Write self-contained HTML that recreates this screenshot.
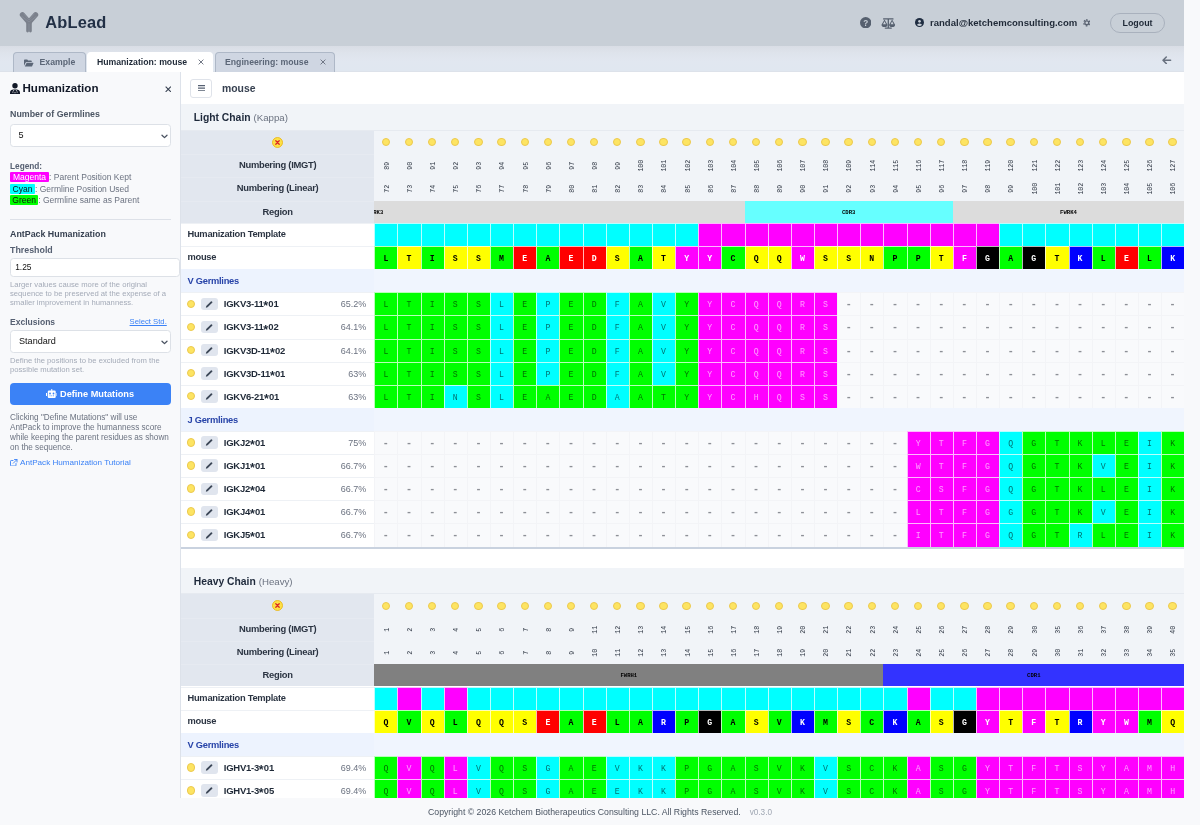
<!DOCTYPE html>
<html lang="en">
<head>
<meta charset="utf-8">
<title>AbLead - Humanization: mouse</title>
<style>
*{box-sizing:border-box}
html,body{margin:0;padding:0;overflow:hidden}
body{width:1200px;height:825px;overflow:hidden;position:relative;background:#f8f9fb;font-family:"Liberation Sans",sans-serif;color:#1f2937;font-size:9px}
svg{display:block}
#wrap{position:absolute;left:0;top:0;width:1200px;height:825px;will-change:transform}
/* ---------- top header ---------- */
#hdr{position:absolute;left:0;top:0;width:1184px;height:46px;background:#c8cfd7}
#logo{position:absolute;left:18.700px;top:11.400px}
#brand{position:absolute;left:45.200px;top:12.400px;font-weight:bold;font-size:16.400px;line-height:20px;color:#223046;letter-spacing:.2px}
.hi{position:absolute}
#email{position:absolute;left:930px;top:16px;font-weight:bold;font-size:9.55px;line-height:13px;color:#1f2937;white-space:nowrap}
#logout{position:absolute;left:1110px;top:13px;width:55px;height:19.500px;border:1px solid #a9b1bd;border-radius:10px;font-weight:bold;font-size:8.900px;line-height:18.800px;text-align:center;color:#1f2937}
/* ---------- tab bar ---------- */
#tabs{position:absolute;left:0;top:46px;width:1184px;height:26px;background:linear-gradient(#d9dde5 0%,#dee3eb 25%,#e1e7f0 60%,#e0e7f0 100%);border-bottom:1px solid #dde2ea}
.tab{position:absolute;top:6px;height:20px;border:1px solid #aeb8c7;border-bottom:none;border-radius:4px 4px 0 0;background:#cfd6e2;color:#5b6677;font-weight:bold;font-size:8.7px;line-height:19px;white-space:nowrap}
.tab.on{background:#fff;border-color:#fff;color:#1f2937}
.tab span{position:absolute;top:0}
/* ---------- sidebar ---------- */
#side{position:absolute;left:0;top:72px;width:181px;height:726px;background:#f8f9fb;border-right:1px solid #dde2ea}
#side .a{position:absolute;left:10px;white-space:nowrap}
.h1{font-weight:bold;font-size:11.6px;line-height:14px;color:#111827}
.lb{font-weight:bold;font-size:8.85px;line-height:11px;color:#4b5563}
.sel{position:absolute;left:10px;width:160.500px;height:22.800px;background:#fff;border:1px solid #dde1e7;border-radius:3.500px;font-size:9.100px;line-height:21.200px;padding-left:8px;color:#111}
.sel svg{position:absolute;right:1.700px;top:8.300px}
.hp{font-size:7.68px;line-height:8.7px;color:#a4abb8}
.lg{font-size:8.5px;line-height:11.4px;color:#6b7280}
.lg b{font-weight:normal;display:inline;padding:0 3px;border-radius:1px}
#btn{position:absolute;left:10px;top:311.2px;width:160.5px;height:21.8px;background:#3b82f6;border-radius:4px;color:#fff;font-weight:bold;font-size:9.2px;line-height:21.800px}
/* ---------- main ---------- */
#main{position:absolute;left:181px;top:72px;width:1003px;height:726px;background:#fff;overflow:hidden}
#pg{position:absolute;left:-181px;top:-72px;width:1200px;height:825px}
#pg>div,#pg>i{position:absolute}
#tb{left:181px;top:72px;width:1003px;height:32.2px;background:#fff}
#hb{left:190.300px;top:79.200px;width:21.500px;height:18.5px;border:1px solid #dfe3ea;border-radius:3px;background:#fff}
#ttl{left:222px;top:82px;font-weight:bold;font-size:10.4px;line-height:13px;color:#374151}
.ct{left:181px;width:1003px;background:#f1f4f8;border-bottom:1px solid #e6eaf0;padding-left:12.700px;font-size:10.350px;color:#1e293b;white-space:nowrap}
.ct span{color:#6b7280;font-size:9.700px}
.hbg{left:181px;width:193.3px;background:#e2e7ef}
.nbg{left:374.3px;width:810px;background:#f1f4f8}
.hl{left:181px;width:193.300px;height:23.330px;text-align:center;font-weight:bold;font-size:9.400px;letter-spacing:-.27px;line-height:20px;color:#2b3442;border-top:1px solid #e6eaf1}
.hl .xi{position:absolute;left:91.300px;top:6.300px}
.wl{left:181px;width:193.300px;height:23.700px;background:#fff;padding-left:6.500px;font-weight:bold;font-size:9.300px;letter-spacing:-.26px;line-height:21.400px;color:#2b3442;border-top:1px solid #eef1f5}
.sec{left:181px;width:1003.200px;height:23.700px;background:linear-gradient(90deg,#edf3fe 193.300px,#f0f5fe 193.300px);padding-left:6.500px;font-weight:bold;font-size:9.300px;letter-spacing:-.26px;line-height:24.200px;color:#2743a8}
.gl{left:181px;width:193.300px;height:23.700px;background:#fff;border-top:1px solid #eef1f5;font-size:9.1px;line-height:23.2px}
.gl .d2{position:absolute;left:5.800px;top:6.400px}
.gl .eb{position:absolute;left:20.400px;top:4.600px;width:16.400px;height:12.400px;border-radius:3px;background:#e0e5ee}
.gl .eb svg{position:absolute;left:3.900px;top:1.900px}
.gl .gn{position:absolute;left:42.800px;top:0;font-weight:bold;color:#1f2937;font-size:9.500px;letter-spacing:-.26px;line-height:22.200px}.gl .gn i{font-style:normal;font-size:12.500px;line-height:0;position:relative;top:3.100px;margin:0 .15px 0 -.1px;letter-spacing:0}
.gl .gp{position:absolute;right:8px;top:0;color:#6b7280;font-size:9px}
.dot{position:absolute;display:block;width:8.400px;height:8.400px;border-radius:50%;background:#fde462;border:1px solid #ecc94f}
.c{width:23.700px;height:23.700px;padding-right:1.560px;border-left:1px solid rgba(255,255,255,.72);border-top:1px solid rgba(255,255,255,.72);text-align:center;font-family:"Liberation Mono",monospace;font-size:8.200px;line-height:23.600px}
.c.mo{font-weight:bold}
.c.e{background:#f9fafc;border-color:#f3f4f7;color:#8d9097;font-size:10px;font-weight:bold;line-height:24px}
.xg{background:#00ff00;color:#000}.xy{background:#ffff00;color:#000}.xr{background:#ff0000;color:#fff}
.xm{background:#ff00ff;color:#fff}.xc{background:#00ffff;color:#000}.xk{background:#000;color:#fff}.xb{background:#0000ff;color:#fff}
.ge.xg{color:rgba(0,0,0,.58)}.ge.xc{color:rgba(0,0,0,.58)}.ge.xm{color:rgba(255,255,255,.62)}
.n{width:23.140px;height:23.330px;font-family:"Liberation Mono",monospace;font-size:6.600px;color:#2b3340}
.n span{position:absolute;left:1.400px;top:.3px;width:23.140px;height:23.330px;line-height:23.330px;text-align:center;transform:rotate(-90deg)}
.rg{text-align:center;font-family:"Liberation Mono",monospace;font-weight:bold;font-size:5.600px;overflow:hidden;white-space:nowrap}
.rg span{display:inline-block}
.bb{left:181px;width:1003.2px;height:2px;background:#c9d2df}
/* ---------- footer ---------- */
#foot{position:absolute;left:0;top:798px;width:1200px;height:27px;overflow:hidden;background:#f8f9fb;text-align:center;font-size:8.730px;line-height:28.500px;color:#4b5563;white-space:nowrap}
#foot span{color:#a0a7b3;margin-left:6.500px;font-size:8.200px}
#gut{position:absolute;left:1184px;top:0;width:16px;height:825px;background:#f8f9fb}
</style>
</head>
<body>
<div id="wrap">
<div id="hdr">
  <svg id="logo" width="20" height="22" viewBox="0 0 20 22"><g fill="none" stroke="#7b818c" stroke-linecap="round"><path stroke-width="5.200" d="M10 11.200L3.400 3.700M10 11.200L16.600 3.700"/><path stroke-width="2.800" d="M8.600 12V20.100M11.400 12V20.100"/></g><g fill="none" stroke="#9299a4" stroke-width=".5"><path d="M10 11L2.600 5.200M10 9L4.600 2.600M10 11L17.400 5.200M10 9L15.400 2.600M10 12.500V21"/></g></svg>
  <div id="brand">AbLead</div>
  <svg class="hi" style="left:859.700px;top:16.900px" width="11.400" height="11.400" viewBox="0 0 12 12"><circle cx="6" cy="6" r="6" fill="#56606f"/><text x="6" y="9.100" text-anchor="middle" font-family="Liberation Sans" font-weight="bold" font-size="8.600" fill="#c8cfd7">?</text></svg>
  <svg class="hi" style="left:881px;top:16.700px" width="14.600" height="12.400" viewBox="0 0 14.600 12.400"><g fill="none" stroke="#56606f" stroke-width="1.300" stroke-linecap="round"><path d="M2.600 1.900H12M7.300 1.900V10.900M4.300 11.100H10.300"/></g><path fill="#56606f" d="M3.500 2.600L.5 7.800a3 2.300 0 0 0 6 0zM11.100 2.600L8.100 7.800a3 2.300 0 0 0 6 0z"/><path fill="#c8cfd7" d="M3.500 4.300L2 7.200h3zM11.100 4.300L9.600 7.200h3z"/></svg>
  <svg class="hi" style="left:915.100px;top:18.100px" width="9" height="9" viewBox="0 0 10 10"><circle cx="5" cy="5" r="5" fill="#1f2d41"/><circle cx="5" cy="3.700" r="1.500" fill="#c8cfd7"/><path d="M2.300 7.900a2.700 1.900 0 0 1 5.400 0a4.300 4.300 0 0 1-5.400 0z" fill="#c8cfd7"/></svg>
  <div id="email">randal@ketchemconsulting.com</div>
  <svg class="hi" style="left:1082.700px;top:19.100px" width="7.600" height="7.600" viewBox="0 0 16 16"><g fill="none" stroke="#5a6372"><circle cx="8" cy="8" r="4.100" stroke-width="2.700"/><circle cx="8" cy="8" r="6.400" stroke-width="2.600" stroke-dasharray="3.300 3.402" transform="rotate(-104.8 8 8)"/></g></svg>
  <div id="logout">Logout</div>
</div>
<div id="tabs">
  <div class="tab" style="left:13px;width:73px"><svg style="position:absolute;left:10px;top:5.500px" width="9.500" height="8" viewBox="0 0 19 16"><path fill="#5b6677" d="M1.500 1h5l1.600 2H14a1.500 1.500 0 0 1 1.500 1.500V6H5.200a2 2 0 0 0-1.800 1.100L0 13.500V2.500A1.500 1.500 0 0 1 1.500 1zM5.300 7.300H18a1 1 0 0 1 .9 1.400l-2.700 5.700a1 1 0 0 1-.9.600H1.600z"/></svg><span style="left:25.500px">Example</span></div>
  <div class="tab on" style="left:87px;width:126px"><span style="left:8.900px">Humanization: mouse</span><svg style="position:absolute;left:109.500px;top:5.700px" width="6" height="6" viewBox="0 0 6 6"><path d="M.6.600L5.400 5.400M5.400.600L.6 5.400" stroke="#6b7280" stroke-width=".95" fill="none"/></svg></div>
  <div class="tab" style="left:214.500px;width:120.500px"><span style="left:9.500px">Engineering: mouse</span><svg style="position:absolute;left:104px;top:5.700px" width="6" height="6" viewBox="0 0 6 6"><path d="M.6.600L5.400 5.400M5.400.600L.6 5.400" stroke="#6b7280" stroke-width=".95" fill="none"/></svg></div>
  <svg style="position:absolute;left:1162px;top:9.500px" width="9.500" height="8.600" viewBox="0 0 9.500 8.600"><path d="M4.300 1L1 4.300L4.300 7.600M1.300 4.300H8.600" stroke="#68717f" stroke-width="1.500" fill="none" stroke-linecap="round" stroke-linejoin="round"/></svg>
</div>
<div id="side">
  <svg style="position:absolute;left:10px;top:11px" width="10" height="11.500" viewBox="0 0 10 11.500"><circle cx="5" cy="2.700" r="2.700" fill="#111827"/><path d="M0 10.900V9.600C0 7.700 1.600 6.500 3.400 6.500h3.200C8.400 6.500 10 7.700 10 9.600v1.300z" fill="#111827"/><path d="M2.100 9.100h1.400M6.500 9.100h1.400M4.300 9.700h1.400M3.600 7v1.200M6.400 7v1.200" stroke="#f8f9fb" stroke-width=".7"/></svg>
  <div class="a h1" style="left:22.500px;top:9.400px">Humanization</div>
  <svg style="position:absolute;left:164.500px;top:13.500px" width="6.500" height="6.500" viewBox="0 0 6 6"><path d="M.6.600L5.400 5.400M5.400.600L.6 5.400" stroke="#374151" stroke-width="1" fill="none"/></svg>
  <div class="a lb" style="top:36.500px">Number of Germlines</div>
  <div class="sel" style="top:52.300px;padding-left:7.400px">5<svg width="7" height="5" viewBox="0 0 7 5"><path d="M1 1.200L3.500 3.600L6 1.200" stroke="#4a5261" stroke-width="1.300" fill="none" stroke-linecap="round" stroke-linejoin="round"/></svg></div>
  <div class="a lb" style="top:88.800px;font-size:8.250px;color:#566072">Legend:</div>
  <div class="a lg" style="top:100.300px"><b style="background:#ff00ff;color:#fff">Magenta</b>: Parent Position Kept</div>
  <div class="a lg" style="top:111.700px"><b style="background:#00ffff;color:#111;padding:0 2.600px">Cyan</b>: Germline Position Used</div>
  <div class="a lg" style="top:123.200px"><b style="background:#00ff00;color:#111;padding:0 2.300px">Green</b>: Germline same as Parent</div>
  <div style="position:absolute;left:10px;top:146.500px;width:160.500px;height:1px;background:#dde1e8"></div>
  <div class="a lb" style="top:157px;color:#374151">AntPack Humanization</div>
  <div class="a lb" style="top:172.500px;color:#566072">Threshold</div>
  <div class="sel" style="top:186.300px;width:169.500px;height:19px;line-height:17.600px;padding-left:4.200px;font-size:8.400px">1.25</div>
  <div class="a hp" style="top:209.300px">Larger values cause more of the original</div><div class="a hp" style="top:218px">sequence to be preserved at the expense of a</div><div class="a hp" style="top:226.600px">smaller improvement in humanness.</div>
  <div class="a lb" style="top:244.900px;font-size:8.550px;color:#566072">Exclusions</div>
  <div class="a" style="left:129.600px;top:244.700px;font-size:7.700px;line-height:10px;color:#3b82f6;text-decoration:underline">Select Std.</div>
  <div class="sel" style="top:258.300px;height:22.400px">Standard<svg width="7" height="5" viewBox="0 0 7 5"><path d="M1 1.200L3.500 3.600L6 1.200" stroke="#4a5261" stroke-width="1.300" fill="none" stroke-linecap="round" stroke-linejoin="round"/></svg></div>
  <div class="a hp" style="top:285px">Define the positions to be excluded from the</div><div class="a hp" style="top:293.700px">possible mutation set.</div>
  <div id="btn"><svg style="position:absolute;left:35.800px;top:6px" width="11.500" height="10" viewBox="0 0 23 20"><path fill="#fff" d="M10.500 0h2v3h4.500a2.500 2.500 0 0 1 2.500 2.500v10A2.500 2.500 0 0 1 17 18H6a2.500 2.500 0 0 1-2.500-2.500v-10A2.500 2.500 0 0 1 6 3h4.500zM0 8h2v6H0zM21 8h2v6h-2z"/><circle cx="8" cy="9" r="1.800" fill="#3b82f6"/><circle cx="15" cy="9" r="1.800" fill="#3b82f6"/><path d="M7 13.500h2M10.500 13.500h2M14 13.500h2" stroke="#3b82f6" stroke-width="1.400"/></svg><span style="position:absolute;left:50px;top:1px">Define Mutations</span></div>
  <div class="a" style="top:340.700px;font-size:8.200px;line-height:10px;color:#6b7280">Clicking "Define Mutations" will use<br>AntPack to improve the humanness score<br>while keeping the parent residues as shown<br>on the sequence.</div>
  <svg style="position:absolute;left:10px;top:386.500px" width="7.500" height="7.500" viewBox="0 0 15 15"><g fill="none" stroke="#3b82f6" stroke-width="1.800" stroke-linecap="round" stroke-linejoin="round"><path d="M6 3H2.500A1.500 1.500 0 0 0 1 4.500v8A1.500 1.500 0 0 0 2.500 14h8a1.500 1.500 0 0 0 1.500-1.500V9"/><path d="M9 1h5v5M14 1L6.500 8.500"/></g></svg>
  <div class="a" style="left:20px;top:385.600px;font-size:8.120px;line-height:10px;color:#3b82f6">AntPack Humanization Tutorial</div>
</div>
<div id="main"><div id="pg">
  <div id="tb"></div>
  <div id="hb"><svg style="position:absolute;left:6.300px;top:4.700px" width="7.400" height="6.400" viewBox="0 0 7.400 6.400"><path d="M0 .6h7.400M0 3.150h7.400M0 5.700h7.400" stroke="#566072" stroke-width="1.100"/></svg></div>
  <div id="ttl">mouse</div>
  <div class="ct" style="top:103.9px;height:26.7px;line-height:28.7px"><b>Light Chain</b> <span>(Kappa)</span></div><div class="hbg" style="top:130.6px;height:92.5px"></div><div class="nbg" style="top:130.6px;height:70px"></div><div class="hl" style="top:130.6px;border-top:none"><span class="xi"><svg viewBox="0 0 11 11" width="11" height="11"><circle cx="5.5" cy="5.5" r="5" fill="#fde047" stroke="#eab308" stroke-width=".8"/><path d="M3.800 3.800L7.200 7.200M7.200 3.800L3.800 7.200" stroke="#dc2626" stroke-width="1.300" stroke-linecap="round"/></svg></span></div><div class="hl" style="top:153.93px">Numbering (IMGT)</div><div class="hl" style="top:177.26px">Numbering (Linear)</div><div class="hl" style="top:200.6px;height:22.5px;line-height:19.600px">Region</div><div class="wl" style="top:223.1px">Humanization Template</div><div class="wl" style="top:246.18px">mouse</div><i class="dot" style="left:381.67px;top:137.97px"></i><i class="dot" style="left:404.81px;top:137.97px"></i><i class="dot" style="left:427.95px;top:137.97px"></i><i class="dot" style="left:451.09px;top:137.97px"></i><i class="dot" style="left:474.23px;top:137.97px"></i><i class="dot" style="left:497.37px;top:137.97px"></i><i class="dot" style="left:520.51px;top:137.97px"></i><i class="dot" style="left:543.65px;top:137.97px"></i><i class="dot" style="left:566.79px;top:137.97px"></i><i class="dot" style="left:589.93px;top:137.97px"></i><i class="dot" style="left:613.07px;top:137.97px"></i><i class="dot" style="left:636.21px;top:137.97px"></i><i class="dot" style="left:659.35px;top:137.97px"></i><i class="dot" style="left:682.49px;top:137.97px"></i><i class="dot" style="left:705.63px;top:137.97px"></i><i class="dot" style="left:728.77px;top:137.97px"></i><i class="dot" style="left:751.91px;top:137.97px"></i><i class="dot" style="left:775.05px;top:137.97px"></i><i class="dot" style="left:798.19px;top:137.97px"></i><i class="dot" style="left:821.33px;top:137.97px"></i><i class="dot" style="left:844.47px;top:137.97px"></i><i class="dot" style="left:867.61px;top:137.97px"></i><i class="dot" style="left:890.75px;top:137.97px"></i><i class="dot" style="left:913.89px;top:137.97px"></i><i class="dot" style="left:937.03px;top:137.97px"></i><i class="dot" style="left:960.17px;top:137.97px"></i><i class="dot" style="left:983.31px;top:137.97px"></i><i class="dot" style="left:1006.45px;top:137.97px"></i><i class="dot" style="left:1029.59px;top:137.97px"></i><i class="dot" style="left:1052.73px;top:137.97px"></i><i class="dot" style="left:1075.87px;top:137.97px"></i><i class="dot" style="left:1099.01px;top:137.97px"></i><i class="dot" style="left:1122.15px;top:137.97px"></i><i class="dot" style="left:1145.29px;top:137.97px"></i><i class="dot" style="left:1168.43px;top:137.97px"></i><div class="n" style="left:374.3px;top:153.93px"><span>89</span></div><div class="n" style="left:397.44px;top:153.93px"><span>90</span></div><div class="n" style="left:420.58px;top:153.93px"><span>91</span></div><div class="n" style="left:443.72px;top:153.93px"><span>92</span></div><div class="n" style="left:466.86px;top:153.93px"><span>93</span></div><div class="n" style="left:490px;top:153.93px"><span>94</span></div><div class="n" style="left:513.14px;top:153.93px"><span>95</span></div><div class="n" style="left:536.28px;top:153.93px"><span>96</span></div><div class="n" style="left:559.42px;top:153.93px"><span>97</span></div><div class="n" style="left:582.56px;top:153.93px"><span>98</span></div><div class="n" style="left:605.7px;top:153.93px"><span>99</span></div><div class="n" style="left:628.84px;top:153.93px"><span>100</span></div><div class="n" style="left:651.98px;top:153.93px"><span>101</span></div><div class="n" style="left:675.12px;top:153.93px"><span>102</span></div><div class="n" style="left:698.26px;top:153.93px"><span>103</span></div><div class="n" style="left:721.4px;top:153.93px"><span>104</span></div><div class="n" style="left:744.54px;top:153.93px"><span>105</span></div><div class="n" style="left:767.68px;top:153.93px"><span>106</span></div><div class="n" style="left:790.82px;top:153.93px"><span>107</span></div><div class="n" style="left:813.96px;top:153.93px"><span>108</span></div><div class="n" style="left:837.1px;top:153.93px"><span>109</span></div><div class="n" style="left:860.24px;top:153.93px"><span>114</span></div><div class="n" style="left:883.38px;top:153.93px"><span>115</span></div><div class="n" style="left:906.52px;top:153.93px"><span>116</span></div><div class="n" style="left:929.66px;top:153.93px"><span>117</span></div><div class="n" style="left:952.8px;top:153.93px"><span>118</span></div><div class="n" style="left:975.94px;top:153.93px"><span>119</span></div><div class="n" style="left:999.08px;top:153.93px"><span>120</span></div><div class="n" style="left:1022.22px;top:153.93px"><span>121</span></div><div class="n" style="left:1045.36px;top:153.93px"><span>122</span></div><div class="n" style="left:1068.5px;top:153.93px"><span>123</span></div><div class="n" style="left:1091.64px;top:153.93px"><span>124</span></div><div class="n" style="left:1114.78px;top:153.93px"><span>125</span></div><div class="n" style="left:1137.92px;top:153.93px"><span>126</span></div><div class="n" style="left:1161.06px;top:153.93px"><span>127</span></div><div class="n" style="left:374.3px;top:176.76px"><span>72</span></div><div class="n" style="left:397.44px;top:176.76px"><span>73</span></div><div class="n" style="left:420.58px;top:176.76px"><span>74</span></div><div class="n" style="left:443.72px;top:176.76px"><span>75</span></div><div class="n" style="left:466.86px;top:176.76px"><span>76</span></div><div class="n" style="left:490px;top:176.76px"><span>77</span></div><div class="n" style="left:513.14px;top:176.76px"><span>78</span></div><div class="n" style="left:536.28px;top:176.76px"><span>79</span></div><div class="n" style="left:559.42px;top:176.76px"><span>80</span></div><div class="n" style="left:582.56px;top:176.76px"><span>81</span></div><div class="n" style="left:605.7px;top:176.76px"><span>82</span></div><div class="n" style="left:628.84px;top:176.76px"><span>83</span></div><div class="n" style="left:651.98px;top:176.76px"><span>84</span></div><div class="n" style="left:675.12px;top:176.76px"><span>85</span></div><div class="n" style="left:698.26px;top:176.76px"><span>86</span></div><div class="n" style="left:721.4px;top:176.76px"><span>87</span></div><div class="n" style="left:744.54px;top:176.76px"><span>88</span></div><div class="n" style="left:767.68px;top:176.76px"><span>89</span></div><div class="n" style="left:790.82px;top:176.76px"><span>90</span></div><div class="n" style="left:813.96px;top:176.76px"><span>91</span></div><div class="n" style="left:837.1px;top:176.76px"><span>92</span></div><div class="n" style="left:860.24px;top:176.76px"><span>93</span></div><div class="n" style="left:883.38px;top:176.76px"><span>94</span></div><div class="n" style="left:906.52px;top:176.76px"><span>95</span></div><div class="n" style="left:929.66px;top:176.76px"><span>96</span></div><div class="n" style="left:952.8px;top:176.76px"><span>97</span></div><div class="n" style="left:975.94px;top:176.76px"><span>98</span></div><div class="n" style="left:999.08px;top:176.76px"><span>99</span></div><div class="n" style="left:1022.22px;top:176.76px"><span>100</span></div><div class="n" style="left:1045.36px;top:176.76px"><span>101</span></div><div class="n" style="left:1068.5px;top:176.76px"><span>102</span></div><div class="n" style="left:1091.64px;top:176.76px"><span>103</span></div><div class="n" style="left:1114.78px;top:176.76px"><span>104</span></div><div class="n" style="left:1137.92px;top:176.76px"><span>105</span></div><div class="n" style="left:1161.06px;top:176.76px"><span>106</span></div><div class="rg" style="left:374.3px;top:200.6px;width:370.24px;height:22.5px;line-height:23.4px;background:#dcdcdc;color:#000;text-align:left"><span style="margin-left:-7.800px">FWRK3</span></div><div class="rg" style="left:744.54px;top:200.6px;width:208.26px;height:22.5px;line-height:23.4px;background:#66ffff;color:#000">CDR3</div><div class="rg" style="left:952.8px;top:200.6px;width:231.4px;height:22.5px;line-height:23.4px;background:#dcdcdc;color:#000">FWRK4</div><div class="c t xc" style="left:374.3px;top:223.1px"> </div><div class="c t xc" style="left:397.44px;top:223.1px"> </div><div class="c t xc" style="left:420.58px;top:223.1px"> </div><div class="c t xc" style="left:443.72px;top:223.1px"> </div><div class="c t xc" style="left:466.86px;top:223.1px"> </div><div class="c t xc" style="left:490px;top:223.1px"> </div><div class="c t xc" style="left:513.14px;top:223.1px"> </div><div class="c t xc" style="left:536.28px;top:223.1px"> </div><div class="c t xc" style="left:559.42px;top:223.1px"> </div><div class="c t xc" style="left:582.56px;top:223.1px"> </div><div class="c t xc" style="left:605.7px;top:223.1px"> </div><div class="c t xc" style="left:628.84px;top:223.1px"> </div><div class="c t xc" style="left:651.98px;top:223.1px"> </div><div class="c t xc" style="left:675.12px;top:223.1px"> </div><div class="c t xm" style="left:698.26px;top:223.1px"> </div><div class="c t xm" style="left:721.4px;top:223.1px"> </div><div class="c t xm" style="left:744.54px;top:223.1px"> </div><div class="c t xm" style="left:767.68px;top:223.1px"> </div><div class="c t xm" style="left:790.82px;top:223.1px"> </div><div class="c t xm" style="left:813.96px;top:223.1px"> </div><div class="c t xm" style="left:837.1px;top:223.1px"> </div><div class="c t xm" style="left:860.24px;top:223.1px"> </div><div class="c t xm" style="left:883.38px;top:223.1px"> </div><div class="c t xm" style="left:906.52px;top:223.1px"> </div><div class="c t xm" style="left:929.66px;top:223.1px"> </div><div class="c t xm" style="left:952.8px;top:223.1px"> </div><div class="c t xm" style="left:975.94px;top:223.1px"> </div><div class="c t xc" style="left:999.08px;top:223.1px"> </div><div class="c t xc" style="left:1022.22px;top:223.1px"> </div><div class="c t xc" style="left:1045.36px;top:223.1px"> </div><div class="c t xc" style="left:1068.5px;top:223.1px"> </div><div class="c t xc" style="left:1091.64px;top:223.1px"> </div><div class="c t xc" style="left:1114.78px;top:223.1px"> </div><div class="c t xc" style="left:1137.92px;top:223.1px"> </div><div class="c t xc" style="left:1161.06px;top:223.1px"> </div><div class="c mo xg" style="left:374.3px;top:246.18px">L</div><div class="c mo xy" style="left:397.44px;top:246.18px">T</div><div class="c mo xg" style="left:420.58px;top:246.18px">I</div><div class="c mo xy" style="left:443.72px;top:246.18px">S</div><div class="c mo xy" style="left:466.86px;top:246.18px">S</div><div class="c mo xg" style="left:490px;top:246.18px">M</div><div class="c mo xr" style="left:513.14px;top:246.18px">E</div><div class="c mo xg" style="left:536.28px;top:246.18px">A</div><div class="c mo xr" style="left:559.42px;top:246.18px">E</div><div class="c mo xr" style="left:582.56px;top:246.18px">D</div><div class="c mo xy" style="left:605.7px;top:246.18px">S</div><div class="c mo xg" style="left:628.84px;top:246.18px">A</div><div class="c mo xy" style="left:651.98px;top:246.18px">T</div><div class="c mo xm" style="left:675.12px;top:246.18px">Y</div><div class="c mo xm" style="left:698.26px;top:246.18px">Y</div><div class="c mo xg" style="left:721.4px;top:246.18px">C</div><div class="c mo xy" style="left:744.54px;top:246.18px">Q</div><div class="c mo xy" style="left:767.68px;top:246.18px">Q</div><div class="c mo xm" style="left:790.82px;top:246.18px">W</div><div class="c mo xy" style="left:813.96px;top:246.18px">S</div><div class="c mo xy" style="left:837.1px;top:246.18px">S</div><div class="c mo xy" style="left:860.24px;top:246.18px">N</div><div class="c mo xg" style="left:883.38px;top:246.18px">P</div><div class="c mo xg" style="left:906.52px;top:246.18px">P</div><div class="c mo xy" style="left:929.66px;top:246.18px">T</div><div class="c mo xm" style="left:952.8px;top:246.18px">F</div><div class="c mo xk" style="left:975.94px;top:246.18px">G</div><div class="c mo xg" style="left:999.08px;top:246.18px">A</div><div class="c mo xk" style="left:1022.22px;top:246.18px">G</div><div class="c mo xy" style="left:1045.36px;top:246.18px">T</div><div class="c mo xb" style="left:1068.5px;top:246.18px">K</div><div class="c mo xg" style="left:1091.64px;top:246.18px">L</div><div class="c mo xr" style="left:1114.78px;top:246.18px">E</div><div class="c mo xg" style="left:1137.92px;top:246.18px">L</div><div class="c mo xb" style="left:1161.06px;top:246.18px">K</div><div class="sec" style="top:269.26px">V Germlines</div><div class="gl" style="top:292.34px"><i class="dot d2"></i><span class="eb"><svg viewBox="0 0 10 10" width="8.600" height="8.600"><path fill="#3b4656" d="M1 9l.45-2L6.800 1.650a.85.850 0 0 1 1.200 0l.35.350a.85.850 0 0 1 0 1.200L3 8.550z"/></svg></span><span class="gn">IGKV3-11<i>*</i>01</span><span class="gp">65.2%</span></div><div class="gl" style="top:315.42px"><i class="dot d2"></i><span class="eb"><svg viewBox="0 0 10 10" width="8.600" height="8.600"><path fill="#3b4656" d="M1 9l.45-2L6.800 1.650a.85.850 0 0 1 1.200 0l.35.350a.85.850 0 0 1 0 1.200L3 8.550z"/></svg></span><span class="gn">IGKV3-11<i>*</i>02</span><span class="gp">64.1%</span></div><div class="gl" style="top:338.5px"><i class="dot d2"></i><span class="eb"><svg viewBox="0 0 10 10" width="8.600" height="8.600"><path fill="#3b4656" d="M1 9l.45-2L6.800 1.650a.85.850 0 0 1 1.200 0l.35.350a.85.850 0 0 1 0 1.200L3 8.550z"/></svg></span><span class="gn">IGKV3D-11<i>*</i>02</span><span class="gp">64.1%</span></div><div class="gl" style="top:361.58px"><i class="dot d2"></i><span class="eb"><svg viewBox="0 0 10 10" width="8.600" height="8.600"><path fill="#3b4656" d="M1 9l.45-2L6.800 1.650a.85.850 0 0 1 1.200 0l.35.350a.85.850 0 0 1 0 1.200L3 8.550z"/></svg></span><span class="gn">IGKV3D-11<i>*</i>01</span><span class="gp">63%</span></div><div class="gl" style="top:384.66px"><i class="dot d2"></i><span class="eb"><svg viewBox="0 0 10 10" width="8.600" height="8.600"><path fill="#3b4656" d="M1 9l.45-2L6.800 1.650a.85.850 0 0 1 1.200 0l.35.350a.85.850 0 0 1 0 1.200L3 8.550z"/></svg></span><span class="gn">IGKV6-21<i>*</i>01</span><span class="gp">63%</span></div><div class="c ge xg" style="left:374.3px;top:292.34px">L</div><div class="c ge xg" style="left:397.44px;top:292.34px">T</div><div class="c ge xg" style="left:420.58px;top:292.34px">I</div><div class="c ge xg" style="left:443.72px;top:292.34px">S</div><div class="c ge xg" style="left:466.86px;top:292.34px">S</div><div class="c ge xc" style="left:490px;top:292.34px">L</div><div class="c ge xg" style="left:513.14px;top:292.34px">E</div><div class="c ge xc" style="left:536.28px;top:292.34px">P</div><div class="c ge xg" style="left:559.42px;top:292.34px">E</div><div class="c ge xg" style="left:582.56px;top:292.34px">D</div><div class="c ge xc" style="left:605.7px;top:292.34px">F</div><div class="c ge xg" style="left:628.84px;top:292.34px">A</div><div class="c ge xc" style="left:651.98px;top:292.34px">V</div><div class="c ge xg" style="left:675.12px;top:292.34px">Y</div><div class="c ge xm" style="left:698.26px;top:292.34px">Y</div><div class="c ge xm" style="left:721.4px;top:292.34px">C</div><div class="c ge xm" style="left:744.54px;top:292.34px">Q</div><div class="c ge xm" style="left:767.68px;top:292.34px">Q</div><div class="c ge xm" style="left:790.82px;top:292.34px">R</div><div class="c ge xm" style="left:813.96px;top:292.34px">S</div><div class="c e" style="left:837.1px;top:292.34px">-</div><div class="c e" style="left:860.24px;top:292.34px">-</div><div class="c e" style="left:883.38px;top:292.34px">-</div><div class="c e" style="left:906.52px;top:292.34px">-</div><div class="c e" style="left:929.66px;top:292.34px">-</div><div class="c e" style="left:952.8px;top:292.34px">-</div><div class="c e" style="left:975.94px;top:292.34px">-</div><div class="c e" style="left:999.08px;top:292.34px">-</div><div class="c e" style="left:1022.22px;top:292.34px">-</div><div class="c e" style="left:1045.36px;top:292.34px">-</div><div class="c e" style="left:1068.5px;top:292.34px">-</div><div class="c e" style="left:1091.64px;top:292.34px">-</div><div class="c e" style="left:1114.78px;top:292.34px">-</div><div class="c e" style="left:1137.92px;top:292.34px">-</div><div class="c e" style="left:1161.06px;top:292.34px">-</div><div class="c ge xg" style="left:374.3px;top:315.42px">L</div><div class="c ge xg" style="left:397.44px;top:315.42px">T</div><div class="c ge xg" style="left:420.58px;top:315.42px">I</div><div class="c ge xg" style="left:443.72px;top:315.42px">S</div><div class="c ge xg" style="left:466.86px;top:315.42px">S</div><div class="c ge xc" style="left:490px;top:315.42px">L</div><div class="c ge xg" style="left:513.14px;top:315.42px">E</div><div class="c ge xc" style="left:536.28px;top:315.42px">P</div><div class="c ge xg" style="left:559.42px;top:315.42px">E</div><div class="c ge xg" style="left:582.56px;top:315.42px">D</div><div class="c ge xc" style="left:605.7px;top:315.42px">F</div><div class="c ge xg" style="left:628.84px;top:315.42px">A</div><div class="c ge xc" style="left:651.98px;top:315.42px">V</div><div class="c ge xg" style="left:675.12px;top:315.42px">Y</div><div class="c ge xm" style="left:698.26px;top:315.42px">Y</div><div class="c ge xm" style="left:721.4px;top:315.42px">C</div><div class="c ge xm" style="left:744.54px;top:315.42px">Q</div><div class="c ge xm" style="left:767.68px;top:315.42px">Q</div><div class="c ge xm" style="left:790.82px;top:315.42px">R</div><div class="c ge xm" style="left:813.96px;top:315.42px">S</div><div class="c e" style="left:837.1px;top:315.42px">-</div><div class="c e" style="left:860.24px;top:315.42px">-</div><div class="c e" style="left:883.38px;top:315.42px">-</div><div class="c e" style="left:906.52px;top:315.42px">-</div><div class="c e" style="left:929.66px;top:315.42px">-</div><div class="c e" style="left:952.8px;top:315.42px">-</div><div class="c e" style="left:975.94px;top:315.42px">-</div><div class="c e" style="left:999.08px;top:315.42px">-</div><div class="c e" style="left:1022.22px;top:315.42px">-</div><div class="c e" style="left:1045.36px;top:315.42px">-</div><div class="c e" style="left:1068.5px;top:315.42px">-</div><div class="c e" style="left:1091.64px;top:315.42px">-</div><div class="c e" style="left:1114.78px;top:315.42px">-</div><div class="c e" style="left:1137.92px;top:315.42px">-</div><div class="c e" style="left:1161.06px;top:315.42px">-</div><div class="c ge xg" style="left:374.3px;top:338.5px">L</div><div class="c ge xg" style="left:397.44px;top:338.5px">T</div><div class="c ge xg" style="left:420.58px;top:338.5px">I</div><div class="c ge xg" style="left:443.72px;top:338.5px">S</div><div class="c ge xg" style="left:466.86px;top:338.5px">S</div><div class="c ge xc" style="left:490px;top:338.5px">L</div><div class="c ge xg" style="left:513.14px;top:338.5px">E</div><div class="c ge xc" style="left:536.28px;top:338.5px">P</div><div class="c ge xg" style="left:559.42px;top:338.5px">E</div><div class="c ge xg" style="left:582.56px;top:338.5px">D</div><div class="c ge xc" style="left:605.7px;top:338.5px">F</div><div class="c ge xg" style="left:628.84px;top:338.5px">A</div><div class="c ge xc" style="left:651.98px;top:338.5px">V</div><div class="c ge xg" style="left:675.12px;top:338.5px">Y</div><div class="c ge xm" style="left:698.26px;top:338.5px">Y</div><div class="c ge xm" style="left:721.4px;top:338.5px">C</div><div class="c ge xm" style="left:744.54px;top:338.5px">Q</div><div class="c ge xm" style="left:767.68px;top:338.5px">Q</div><div class="c ge xm" style="left:790.82px;top:338.5px">R</div><div class="c ge xm" style="left:813.96px;top:338.5px">S</div><div class="c e" style="left:837.1px;top:338.5px">-</div><div class="c e" style="left:860.24px;top:338.5px">-</div><div class="c e" style="left:883.38px;top:338.5px">-</div><div class="c e" style="left:906.52px;top:338.5px">-</div><div class="c e" style="left:929.66px;top:338.5px">-</div><div class="c e" style="left:952.8px;top:338.5px">-</div><div class="c e" style="left:975.94px;top:338.5px">-</div><div class="c e" style="left:999.08px;top:338.5px">-</div><div class="c e" style="left:1022.22px;top:338.5px">-</div><div class="c e" style="left:1045.36px;top:338.5px">-</div><div class="c e" style="left:1068.5px;top:338.5px">-</div><div class="c e" style="left:1091.64px;top:338.5px">-</div><div class="c e" style="left:1114.78px;top:338.5px">-</div><div class="c e" style="left:1137.92px;top:338.5px">-</div><div class="c e" style="left:1161.06px;top:338.5px">-</div><div class="c ge xg" style="left:374.3px;top:361.58px">L</div><div class="c ge xg" style="left:397.44px;top:361.58px">T</div><div class="c ge xg" style="left:420.58px;top:361.58px">I</div><div class="c ge xg" style="left:443.72px;top:361.58px">S</div><div class="c ge xg" style="left:466.86px;top:361.58px">S</div><div class="c ge xc" style="left:490px;top:361.58px">L</div><div class="c ge xg" style="left:513.14px;top:361.58px">E</div><div class="c ge xc" style="left:536.28px;top:361.58px">P</div><div class="c ge xg" style="left:559.42px;top:361.58px">E</div><div class="c ge xg" style="left:582.56px;top:361.58px">D</div><div class="c ge xc" style="left:605.7px;top:361.58px">F</div><div class="c ge xg" style="left:628.84px;top:361.58px">A</div><div class="c ge xc" style="left:651.98px;top:361.58px">V</div><div class="c ge xg" style="left:675.12px;top:361.58px">Y</div><div class="c ge xm" style="left:698.26px;top:361.58px">Y</div><div class="c ge xm" style="left:721.4px;top:361.58px">C</div><div class="c ge xm" style="left:744.54px;top:361.58px">Q</div><div class="c ge xm" style="left:767.68px;top:361.58px">Q</div><div class="c ge xm" style="left:790.82px;top:361.58px">R</div><div class="c ge xm" style="left:813.96px;top:361.58px">S</div><div class="c e" style="left:837.1px;top:361.58px">-</div><div class="c e" style="left:860.24px;top:361.58px">-</div><div class="c e" style="left:883.38px;top:361.58px">-</div><div class="c e" style="left:906.52px;top:361.58px">-</div><div class="c e" style="left:929.66px;top:361.58px">-</div><div class="c e" style="left:952.8px;top:361.58px">-</div><div class="c e" style="left:975.94px;top:361.58px">-</div><div class="c e" style="left:999.08px;top:361.58px">-</div><div class="c e" style="left:1022.22px;top:361.58px">-</div><div class="c e" style="left:1045.36px;top:361.58px">-</div><div class="c e" style="left:1068.5px;top:361.58px">-</div><div class="c e" style="left:1091.64px;top:361.58px">-</div><div class="c e" style="left:1114.78px;top:361.58px">-</div><div class="c e" style="left:1137.92px;top:361.58px">-</div><div class="c e" style="left:1161.06px;top:361.58px">-</div><div class="c ge xg" style="left:374.3px;top:384.66px">L</div><div class="c ge xg" style="left:397.44px;top:384.66px">T</div><div class="c ge xg" style="left:420.58px;top:384.66px">I</div><div class="c ge xc" style="left:443.72px;top:384.66px">N</div><div class="c ge xg" style="left:466.86px;top:384.66px">S</div><div class="c ge xc" style="left:490px;top:384.66px">L</div><div class="c ge xg" style="left:513.14px;top:384.66px">E</div><div class="c ge xg" style="left:536.28px;top:384.66px">A</div><div class="c ge xg" style="left:559.42px;top:384.66px">E</div><div class="c ge xg" style="left:582.56px;top:384.66px">D</div><div class="c ge xc" style="left:605.7px;top:384.66px">A</div><div class="c ge xg" style="left:628.84px;top:384.66px">A</div><div class="c ge xg" style="left:651.98px;top:384.66px">T</div><div class="c ge xg" style="left:675.12px;top:384.66px">Y</div><div class="c ge xm" style="left:698.26px;top:384.66px">Y</div><div class="c ge xm" style="left:721.4px;top:384.66px">C</div><div class="c ge xm" style="left:744.54px;top:384.66px">H</div><div class="c ge xm" style="left:767.68px;top:384.66px">Q</div><div class="c ge xm" style="left:790.82px;top:384.66px">S</div><div class="c ge xm" style="left:813.96px;top:384.66px">S</div><div class="c e" style="left:837.1px;top:384.66px">-</div><div class="c e" style="left:860.24px;top:384.66px">-</div><div class="c e" style="left:883.38px;top:384.66px">-</div><div class="c e" style="left:906.52px;top:384.66px">-</div><div class="c e" style="left:929.66px;top:384.66px">-</div><div class="c e" style="left:952.8px;top:384.66px">-</div><div class="c e" style="left:975.94px;top:384.66px">-</div><div class="c e" style="left:999.08px;top:384.66px">-</div><div class="c e" style="left:1022.22px;top:384.66px">-</div><div class="c e" style="left:1045.36px;top:384.66px">-</div><div class="c e" style="left:1068.5px;top:384.66px">-</div><div class="c e" style="left:1091.64px;top:384.66px">-</div><div class="c e" style="left:1114.78px;top:384.66px">-</div><div class="c e" style="left:1137.92px;top:384.66px">-</div><div class="c e" style="left:1161.06px;top:384.66px">-</div><div class="sec" style="top:407.74px">J Germlines</div><div class="gl" style="top:430.82px"><i class="dot d2"></i><span class="eb"><svg viewBox="0 0 10 10" width="8.600" height="8.600"><path fill="#3b4656" d="M1 9l.45-2L6.800 1.650a.85.850 0 0 1 1.200 0l.35.350a.85.850 0 0 1 0 1.200L3 8.550z"/></svg></span><span class="gn">IGKJ2<i>*</i>01</span><span class="gp">75%</span></div><div class="gl" style="top:453.9px"><i class="dot d2"></i><span class="eb"><svg viewBox="0 0 10 10" width="8.600" height="8.600"><path fill="#3b4656" d="M1 9l.45-2L6.800 1.650a.85.850 0 0 1 1.200 0l.35.350a.85.850 0 0 1 0 1.200L3 8.550z"/></svg></span><span class="gn">IGKJ1<i>*</i>01</span><span class="gp">66.7%</span></div><div class="gl" style="top:476.98px"><i class="dot d2"></i><span class="eb"><svg viewBox="0 0 10 10" width="8.600" height="8.600"><path fill="#3b4656" d="M1 9l.45-2L6.800 1.650a.85.850 0 0 1 1.200 0l.35.350a.85.850 0 0 1 0 1.200L3 8.550z"/></svg></span><span class="gn">IGKJ2<i>*</i>04</span><span class="gp">66.7%</span></div><div class="gl" style="top:500.06px"><i class="dot d2"></i><span class="eb"><svg viewBox="0 0 10 10" width="8.600" height="8.600"><path fill="#3b4656" d="M1 9l.45-2L6.800 1.650a.85.850 0 0 1 1.200 0l.35.350a.85.850 0 0 1 0 1.200L3 8.550z"/></svg></span><span class="gn">IGKJ4<i>*</i>01</span><span class="gp">66.7%</span></div><div class="gl" style="top:523.14px"><i class="dot d2"></i><span class="eb"><svg viewBox="0 0 10 10" width="8.600" height="8.600"><path fill="#3b4656" d="M1 9l.45-2L6.800 1.650a.85.850 0 0 1 1.200 0l.35.350a.85.850 0 0 1 0 1.200L3 8.550z"/></svg></span><span class="gn">IGKJ5<i>*</i>01</span><span class="gp">66.7%</span></div><div class="c e" style="left:374.3px;top:430.82px">-</div><div class="c e" style="left:397.44px;top:430.82px">-</div><div class="c e" style="left:420.58px;top:430.82px">-</div><div class="c e" style="left:443.72px;top:430.82px">-</div><div class="c e" style="left:466.86px;top:430.82px">-</div><div class="c e" style="left:490px;top:430.82px">-</div><div class="c e" style="left:513.14px;top:430.82px">-</div><div class="c e" style="left:536.28px;top:430.82px">-</div><div class="c e" style="left:559.42px;top:430.82px">-</div><div class="c e" style="left:582.56px;top:430.82px">-</div><div class="c e" style="left:605.7px;top:430.82px">-</div><div class="c e" style="left:628.84px;top:430.82px">-</div><div class="c e" style="left:651.98px;top:430.82px">-</div><div class="c e" style="left:675.12px;top:430.82px">-</div><div class="c e" style="left:698.26px;top:430.82px">-</div><div class="c e" style="left:721.4px;top:430.82px">-</div><div class="c e" style="left:744.54px;top:430.82px">-</div><div class="c e" style="left:767.68px;top:430.82px">-</div><div class="c e" style="left:790.82px;top:430.82px">-</div><div class="c e" style="left:813.96px;top:430.82px">-</div><div class="c e" style="left:837.1px;top:430.82px">-</div><div class="c e" style="left:860.24px;top:430.82px">-</div><div class="c e" style="left:883.38px;top:430.82px">-</div><div class="c ge xm" style="left:906.52px;top:430.82px">Y</div><div class="c ge xm" style="left:929.66px;top:430.82px">T</div><div class="c ge xm" style="left:952.8px;top:430.82px">F</div><div class="c ge xm" style="left:975.94px;top:430.82px">G</div><div class="c ge xc" style="left:999.08px;top:430.82px">Q</div><div class="c ge xg" style="left:1022.22px;top:430.82px">G</div><div class="c ge xg" style="left:1045.36px;top:430.82px">T</div><div class="c ge xg" style="left:1068.5px;top:430.82px">K</div><div class="c ge xg" style="left:1091.64px;top:430.82px">L</div><div class="c ge xg" style="left:1114.78px;top:430.82px">E</div><div class="c ge xc" style="left:1137.92px;top:430.82px">I</div><div class="c ge xg" style="left:1161.06px;top:430.82px">K</div><div class="c e" style="left:374.3px;top:453.9px">-</div><div class="c e" style="left:397.44px;top:453.9px">-</div><div class="c e" style="left:420.58px;top:453.9px">-</div><div class="c e" style="left:443.72px;top:453.9px">-</div><div class="c e" style="left:466.86px;top:453.9px">-</div><div class="c e" style="left:490px;top:453.9px">-</div><div class="c e" style="left:513.14px;top:453.9px">-</div><div class="c e" style="left:536.28px;top:453.9px">-</div><div class="c e" style="left:559.42px;top:453.9px">-</div><div class="c e" style="left:582.56px;top:453.9px">-</div><div class="c e" style="left:605.7px;top:453.9px">-</div><div class="c e" style="left:628.84px;top:453.9px">-</div><div class="c e" style="left:651.98px;top:453.9px">-</div><div class="c e" style="left:675.12px;top:453.9px">-</div><div class="c e" style="left:698.26px;top:453.9px">-</div><div class="c e" style="left:721.4px;top:453.9px">-</div><div class="c e" style="left:744.54px;top:453.9px">-</div><div class="c e" style="left:767.68px;top:453.9px">-</div><div class="c e" style="left:790.82px;top:453.9px">-</div><div class="c e" style="left:813.96px;top:453.9px">-</div><div class="c e" style="left:837.1px;top:453.9px">-</div><div class="c e" style="left:860.24px;top:453.9px">-</div><div class="c e" style="left:883.38px;top:453.9px">-</div><div class="c ge xm" style="left:906.52px;top:453.9px">W</div><div class="c ge xm" style="left:929.66px;top:453.9px">T</div><div class="c ge xm" style="left:952.8px;top:453.9px">F</div><div class="c ge xm" style="left:975.94px;top:453.9px">G</div><div class="c ge xc" style="left:999.08px;top:453.9px">Q</div><div class="c ge xg" style="left:1022.22px;top:453.9px">G</div><div class="c ge xg" style="left:1045.36px;top:453.9px">T</div><div class="c ge xg" style="left:1068.5px;top:453.9px">K</div><div class="c ge xc" style="left:1091.64px;top:453.9px">V</div><div class="c ge xg" style="left:1114.78px;top:453.9px">E</div><div class="c ge xc" style="left:1137.92px;top:453.9px">I</div><div class="c ge xg" style="left:1161.06px;top:453.9px">K</div><div class="c e" style="left:374.3px;top:476.98px">-</div><div class="c e" style="left:397.44px;top:476.98px">-</div><div class="c e" style="left:420.58px;top:476.98px">-</div><div class="c e" style="left:443.72px;top:476.98px">-</div><div class="c e" style="left:466.86px;top:476.98px">-</div><div class="c e" style="left:490px;top:476.98px">-</div><div class="c e" style="left:513.14px;top:476.98px">-</div><div class="c e" style="left:536.28px;top:476.98px">-</div><div class="c e" style="left:559.42px;top:476.98px">-</div><div class="c e" style="left:582.56px;top:476.98px">-</div><div class="c e" style="left:605.7px;top:476.98px">-</div><div class="c e" style="left:628.84px;top:476.98px">-</div><div class="c e" style="left:651.98px;top:476.98px">-</div><div class="c e" style="left:675.12px;top:476.98px">-</div><div class="c e" style="left:698.26px;top:476.98px">-</div><div class="c e" style="left:721.4px;top:476.98px">-</div><div class="c e" style="left:744.54px;top:476.98px">-</div><div class="c e" style="left:767.68px;top:476.98px">-</div><div class="c e" style="left:790.82px;top:476.98px">-</div><div class="c e" style="left:813.96px;top:476.98px">-</div><div class="c e" style="left:837.1px;top:476.98px">-</div><div class="c e" style="left:860.24px;top:476.98px">-</div><div class="c e" style="left:883.38px;top:476.98px">-</div><div class="c ge xm" style="left:906.52px;top:476.98px">C</div><div class="c ge xm" style="left:929.66px;top:476.98px">S</div><div class="c ge xm" style="left:952.8px;top:476.98px">F</div><div class="c ge xm" style="left:975.94px;top:476.98px">G</div><div class="c ge xc" style="left:999.08px;top:476.98px">Q</div><div class="c ge xg" style="left:1022.22px;top:476.98px">G</div><div class="c ge xg" style="left:1045.36px;top:476.98px">T</div><div class="c ge xg" style="left:1068.5px;top:476.98px">K</div><div class="c ge xg" style="left:1091.64px;top:476.98px">L</div><div class="c ge xg" style="left:1114.78px;top:476.98px">E</div><div class="c ge xc" style="left:1137.92px;top:476.98px">I</div><div class="c ge xg" style="left:1161.06px;top:476.98px">K</div><div class="c e" style="left:374.3px;top:500.06px">-</div><div class="c e" style="left:397.44px;top:500.06px">-</div><div class="c e" style="left:420.58px;top:500.06px">-</div><div class="c e" style="left:443.72px;top:500.06px">-</div><div class="c e" style="left:466.86px;top:500.06px">-</div><div class="c e" style="left:490px;top:500.06px">-</div><div class="c e" style="left:513.14px;top:500.06px">-</div><div class="c e" style="left:536.28px;top:500.06px">-</div><div class="c e" style="left:559.42px;top:500.06px">-</div><div class="c e" style="left:582.56px;top:500.06px">-</div><div class="c e" style="left:605.7px;top:500.06px">-</div><div class="c e" style="left:628.84px;top:500.06px">-</div><div class="c e" style="left:651.98px;top:500.06px">-</div><div class="c e" style="left:675.12px;top:500.06px">-</div><div class="c e" style="left:698.26px;top:500.06px">-</div><div class="c e" style="left:721.4px;top:500.06px">-</div><div class="c e" style="left:744.54px;top:500.06px">-</div><div class="c e" style="left:767.68px;top:500.06px">-</div><div class="c e" style="left:790.82px;top:500.06px">-</div><div class="c e" style="left:813.96px;top:500.06px">-</div><div class="c e" style="left:837.1px;top:500.06px">-</div><div class="c e" style="left:860.24px;top:500.06px">-</div><div class="c e" style="left:883.38px;top:500.06px">-</div><div class="c ge xm" style="left:906.52px;top:500.06px">L</div><div class="c ge xm" style="left:929.66px;top:500.06px">T</div><div class="c ge xm" style="left:952.8px;top:500.06px">F</div><div class="c ge xm" style="left:975.94px;top:500.06px">G</div><div class="c ge xc" style="left:999.08px;top:500.06px">G</div><div class="c ge xg" style="left:1022.22px;top:500.06px">G</div><div class="c ge xg" style="left:1045.36px;top:500.06px">T</div><div class="c ge xg" style="left:1068.5px;top:500.06px">K</div><div class="c ge xc" style="left:1091.64px;top:500.06px">V</div><div class="c ge xg" style="left:1114.78px;top:500.06px">E</div><div class="c ge xc" style="left:1137.92px;top:500.06px">I</div><div class="c ge xg" style="left:1161.06px;top:500.06px">K</div><div class="c e" style="left:374.3px;top:523.14px">-</div><div class="c e" style="left:397.44px;top:523.14px">-</div><div class="c e" style="left:420.58px;top:523.14px">-</div><div class="c e" style="left:443.72px;top:523.14px">-</div><div class="c e" style="left:466.86px;top:523.14px">-</div><div class="c e" style="left:490px;top:523.14px">-</div><div class="c e" style="left:513.14px;top:523.14px">-</div><div class="c e" style="left:536.28px;top:523.14px">-</div><div class="c e" style="left:559.42px;top:523.14px">-</div><div class="c e" style="left:582.56px;top:523.14px">-</div><div class="c e" style="left:605.7px;top:523.14px">-</div><div class="c e" style="left:628.84px;top:523.14px">-</div><div class="c e" style="left:651.98px;top:523.14px">-</div><div class="c e" style="left:675.12px;top:523.14px">-</div><div class="c e" style="left:698.26px;top:523.14px">-</div><div class="c e" style="left:721.4px;top:523.14px">-</div><div class="c e" style="left:744.54px;top:523.14px">-</div><div class="c e" style="left:767.68px;top:523.14px">-</div><div class="c e" style="left:790.82px;top:523.14px">-</div><div class="c e" style="left:813.96px;top:523.14px">-</div><div class="c e" style="left:837.1px;top:523.14px">-</div><div class="c e" style="left:860.24px;top:523.14px">-</div><div class="c e" style="left:883.38px;top:523.14px">-</div><div class="c ge xm" style="left:906.52px;top:523.14px">I</div><div class="c ge xm" style="left:929.66px;top:523.14px">T</div><div class="c ge xm" style="left:952.8px;top:523.14px">F</div><div class="c ge xm" style="left:975.94px;top:523.14px">G</div><div class="c ge xc" style="left:999.08px;top:523.14px">Q</div><div class="c ge xg" style="left:1022.22px;top:523.14px">G</div><div class="c ge xg" style="left:1045.36px;top:523.14px">T</div><div class="c ge xc" style="left:1068.5px;top:523.14px">R</div><div class="c ge xg" style="left:1091.64px;top:523.14px">L</div><div class="c ge xg" style="left:1114.78px;top:523.14px">E</div><div class="c ge xc" style="left:1137.92px;top:523.14px">I</div><div class="c ge xg" style="left:1161.06px;top:523.14px">K</div><div class="bb" style="top:547.12px"></div>
  <div class="ct" style="top:568.1px;height:26.1px;line-height:28.1px"><b>Heavy Chain</b> <span>(Heavy)</span></div><div class="hbg" style="top:594.2px;height:92.3px"></div><div class="nbg" style="top:594.2px;height:70px"></div><div class="hl" style="top:594.2px;border-top:none"><span class="xi"><svg viewBox="0 0 11 11" width="11" height="11"><circle cx="5.5" cy="5.5" r="5" fill="#fde047" stroke="#eab308" stroke-width=".8"/><path d="M3.800 3.800L7.200 7.200M7.200 3.800L3.800 7.200" stroke="#dc2626" stroke-width="1.300" stroke-linecap="round"/></svg></span></div><div class="hl" style="top:617.53px">Numbering (IMGT)</div><div class="hl" style="top:640.86px">Numbering (Linear)</div><div class="hl" style="top:664.2px;height:22.3px;line-height:19.600px">Region</div><div class="wl" style="top:686.5px">Humanization Template</div><div class="wl" style="top:709.58px">mouse</div><i class="dot" style="left:381.67px;top:601.56px"></i><i class="dot" style="left:404.81px;top:601.56px"></i><i class="dot" style="left:427.95px;top:601.56px"></i><i class="dot" style="left:451.09px;top:601.56px"></i><i class="dot" style="left:474.23px;top:601.56px"></i><i class="dot" style="left:497.37px;top:601.56px"></i><i class="dot" style="left:520.51px;top:601.56px"></i><i class="dot" style="left:543.65px;top:601.56px"></i><i class="dot" style="left:566.79px;top:601.56px"></i><i class="dot" style="left:589.93px;top:601.56px"></i><i class="dot" style="left:613.07px;top:601.56px"></i><i class="dot" style="left:636.21px;top:601.56px"></i><i class="dot" style="left:659.35px;top:601.56px"></i><i class="dot" style="left:682.49px;top:601.56px"></i><i class="dot" style="left:705.63px;top:601.56px"></i><i class="dot" style="left:728.77px;top:601.56px"></i><i class="dot" style="left:751.91px;top:601.56px"></i><i class="dot" style="left:775.05px;top:601.56px"></i><i class="dot" style="left:798.19px;top:601.56px"></i><i class="dot" style="left:821.33px;top:601.56px"></i><i class="dot" style="left:844.47px;top:601.56px"></i><i class="dot" style="left:867.61px;top:601.56px"></i><i class="dot" style="left:890.75px;top:601.56px"></i><i class="dot" style="left:913.89px;top:601.56px"></i><i class="dot" style="left:937.03px;top:601.56px"></i><i class="dot" style="left:960.17px;top:601.56px"></i><i class="dot" style="left:983.31px;top:601.56px"></i><i class="dot" style="left:1006.45px;top:601.56px"></i><i class="dot" style="left:1029.59px;top:601.56px"></i><i class="dot" style="left:1052.73px;top:601.56px"></i><i class="dot" style="left:1075.87px;top:601.56px"></i><i class="dot" style="left:1099.01px;top:601.56px"></i><i class="dot" style="left:1122.15px;top:601.56px"></i><i class="dot" style="left:1145.29px;top:601.56px"></i><i class="dot" style="left:1168.43px;top:601.56px"></i><div class="n" style="left:374.3px;top:617.53px"><span>1</span></div><div class="n" style="left:397.44px;top:617.53px"><span>2</span></div><div class="n" style="left:420.58px;top:617.53px"><span>3</span></div><div class="n" style="left:443.72px;top:617.53px"><span>4</span></div><div class="n" style="left:466.86px;top:617.53px"><span>5</span></div><div class="n" style="left:490px;top:617.53px"><span>6</span></div><div class="n" style="left:513.14px;top:617.53px"><span>7</span></div><div class="n" style="left:536.28px;top:617.53px"><span>8</span></div><div class="n" style="left:559.42px;top:617.53px"><span>9</span></div><div class="n" style="left:582.56px;top:617.53px"><span>11</span></div><div class="n" style="left:605.7px;top:617.53px"><span>12</span></div><div class="n" style="left:628.84px;top:617.53px"><span>13</span></div><div class="n" style="left:651.98px;top:617.53px"><span>14</span></div><div class="n" style="left:675.12px;top:617.53px"><span>15</span></div><div class="n" style="left:698.26px;top:617.53px"><span>16</span></div><div class="n" style="left:721.4px;top:617.53px"><span>17</span></div><div class="n" style="left:744.54px;top:617.53px"><span>18</span></div><div class="n" style="left:767.68px;top:617.53px"><span>19</span></div><div class="n" style="left:790.82px;top:617.53px"><span>20</span></div><div class="n" style="left:813.96px;top:617.53px"><span>21</span></div><div class="n" style="left:837.1px;top:617.53px"><span>22</span></div><div class="n" style="left:860.24px;top:617.53px"><span>23</span></div><div class="n" style="left:883.38px;top:617.53px"><span>24</span></div><div class="n" style="left:906.52px;top:617.53px"><span>25</span></div><div class="n" style="left:929.66px;top:617.53px"><span>26</span></div><div class="n" style="left:952.8px;top:617.53px"><span>27</span></div><div class="n" style="left:975.94px;top:617.53px"><span>28</span></div><div class="n" style="left:999.08px;top:617.53px"><span>29</span></div><div class="n" style="left:1022.22px;top:617.53px"><span>30</span></div><div class="n" style="left:1045.36px;top:617.53px"><span>35</span></div><div class="n" style="left:1068.5px;top:617.53px"><span>36</span></div><div class="n" style="left:1091.64px;top:617.53px"><span>37</span></div><div class="n" style="left:1114.78px;top:617.53px"><span>38</span></div><div class="n" style="left:1137.92px;top:617.53px"><span>39</span></div><div class="n" style="left:1161.06px;top:617.53px"><span>40</span></div><div class="n" style="left:374.3px;top:640.36px"><span>1</span></div><div class="n" style="left:397.44px;top:640.36px"><span>2</span></div><div class="n" style="left:420.58px;top:640.36px"><span>3</span></div><div class="n" style="left:443.72px;top:640.36px"><span>4</span></div><div class="n" style="left:466.86px;top:640.36px"><span>5</span></div><div class="n" style="left:490px;top:640.36px"><span>6</span></div><div class="n" style="left:513.14px;top:640.36px"><span>7</span></div><div class="n" style="left:536.28px;top:640.36px"><span>8</span></div><div class="n" style="left:559.42px;top:640.36px"><span>9</span></div><div class="n" style="left:582.56px;top:640.36px"><span>10</span></div><div class="n" style="left:605.7px;top:640.36px"><span>11</span></div><div class="n" style="left:628.84px;top:640.36px"><span>12</span></div><div class="n" style="left:651.98px;top:640.36px"><span>13</span></div><div class="n" style="left:675.12px;top:640.36px"><span>14</span></div><div class="n" style="left:698.26px;top:640.36px"><span>15</span></div><div class="n" style="left:721.4px;top:640.36px"><span>16</span></div><div class="n" style="left:744.54px;top:640.36px"><span>17</span></div><div class="n" style="left:767.68px;top:640.36px"><span>18</span></div><div class="n" style="left:790.82px;top:640.36px"><span>19</span></div><div class="n" style="left:813.96px;top:640.36px"><span>20</span></div><div class="n" style="left:837.1px;top:640.36px"><span>21</span></div><div class="n" style="left:860.24px;top:640.36px"><span>22</span></div><div class="n" style="left:883.38px;top:640.36px"><span>23</span></div><div class="n" style="left:906.52px;top:640.36px"><span>24</span></div><div class="n" style="left:929.66px;top:640.36px"><span>25</span></div><div class="n" style="left:952.8px;top:640.36px"><span>26</span></div><div class="n" style="left:975.94px;top:640.36px"><span>27</span></div><div class="n" style="left:999.08px;top:640.36px"><span>28</span></div><div class="n" style="left:1022.22px;top:640.36px"><span>29</span></div><div class="n" style="left:1045.36px;top:640.36px"><span>30</span></div><div class="n" style="left:1068.5px;top:640.36px"><span>31</span></div><div class="n" style="left:1091.64px;top:640.36px"><span>32</span></div><div class="n" style="left:1114.78px;top:640.36px"><span>33</span></div><div class="n" style="left:1137.92px;top:640.36px"><span>34</span></div><div class="n" style="left:1161.06px;top:640.36px"><span>35</span></div><div class="rg" style="left:374.3px;top:664.2px;width:509.08px;height:22.3px;line-height:23.2px;background:#808080;color:#000">FWRH1</div><div class="rg" style="left:883.38px;top:664.2px;width:300.82px;height:22.3px;line-height:23.2px;background:#3333ff;color:#000">CDR1</div><div class="c t xc" style="left:374.3px;top:686.5px"> </div><div class="c t xm" style="left:397.44px;top:686.5px"> </div><div class="c t xc" style="left:420.58px;top:686.5px"> </div><div class="c t xm" style="left:443.72px;top:686.5px"> </div><div class="c t xc" style="left:466.86px;top:686.5px"> </div><div class="c t xc" style="left:490px;top:686.5px"> </div><div class="c t xc" style="left:513.14px;top:686.5px"> </div><div class="c t xc" style="left:536.28px;top:686.5px"> </div><div class="c t xc" style="left:559.42px;top:686.5px"> </div><div class="c t xc" style="left:582.56px;top:686.5px"> </div><div class="c t xc" style="left:605.7px;top:686.5px"> </div><div class="c t xc" style="left:628.84px;top:686.5px"> </div><div class="c t xc" style="left:651.98px;top:686.5px"> </div><div class="c t xc" style="left:675.12px;top:686.5px"> </div><div class="c t xc" style="left:698.26px;top:686.5px"> </div><div class="c t xc" style="left:721.4px;top:686.5px"> </div><div class="c t xc" style="left:744.54px;top:686.5px"> </div><div class="c t xc" style="left:767.68px;top:686.5px"> </div><div class="c t xc" style="left:790.82px;top:686.5px"> </div><div class="c t xc" style="left:813.96px;top:686.5px"> </div><div class="c t xc" style="left:837.1px;top:686.5px"> </div><div class="c t xc" style="left:860.24px;top:686.5px"> </div><div class="c t xc" style="left:883.38px;top:686.5px"> </div><div class="c t xm" style="left:906.52px;top:686.5px"> </div><div class="c t xc" style="left:929.66px;top:686.5px"> </div><div class="c t xc" style="left:952.8px;top:686.5px"> </div><div class="c t xm" style="left:975.94px;top:686.5px"> </div><div class="c t xm" style="left:999.08px;top:686.5px"> </div><div class="c t xm" style="left:1022.22px;top:686.5px"> </div><div class="c t xm" style="left:1045.36px;top:686.5px"> </div><div class="c t xm" style="left:1068.5px;top:686.5px"> </div><div class="c t xm" style="left:1091.64px;top:686.5px"> </div><div class="c t xm" style="left:1114.78px;top:686.5px"> </div><div class="c t xm" style="left:1137.92px;top:686.5px"> </div><div class="c t xm" style="left:1161.06px;top:686.5px"> </div><div class="c mo xy" style="left:374.3px;top:709.58px">Q</div><div class="c mo xg" style="left:397.44px;top:709.58px">V</div><div class="c mo xy" style="left:420.58px;top:709.58px">Q</div><div class="c mo xg" style="left:443.72px;top:709.58px">L</div><div class="c mo xy" style="left:466.86px;top:709.58px">Q</div><div class="c mo xy" style="left:490px;top:709.58px">Q</div><div class="c mo xy" style="left:513.14px;top:709.58px">S</div><div class="c mo xr" style="left:536.28px;top:709.58px">E</div><div class="c mo xg" style="left:559.42px;top:709.58px">A</div><div class="c mo xr" style="left:582.56px;top:709.58px">E</div><div class="c mo xg" style="left:605.7px;top:709.58px">L</div><div class="c mo xg" style="left:628.84px;top:709.58px">A</div><div class="c mo xb" style="left:651.98px;top:709.58px">R</div><div class="c mo xg" style="left:675.12px;top:709.58px">P</div><div class="c mo xk" style="left:698.26px;top:709.58px">G</div><div class="c mo xg" style="left:721.4px;top:709.58px">A</div><div class="c mo xy" style="left:744.54px;top:709.58px">S</div><div class="c mo xg" style="left:767.68px;top:709.58px">V</div><div class="c mo xb" style="left:790.82px;top:709.58px">K</div><div class="c mo xg" style="left:813.96px;top:709.58px">M</div><div class="c mo xy" style="left:837.1px;top:709.58px">S</div><div class="c mo xg" style="left:860.24px;top:709.58px">C</div><div class="c mo xb" style="left:883.38px;top:709.58px">K</div><div class="c mo xg" style="left:906.52px;top:709.58px">A</div><div class="c mo xy" style="left:929.66px;top:709.58px">S</div><div class="c mo xk" style="left:952.8px;top:709.58px">G</div><div class="c mo xm" style="left:975.94px;top:709.58px">Y</div><div class="c mo xy" style="left:999.08px;top:709.58px">T</div><div class="c mo xm" style="left:1022.22px;top:709.58px">F</div><div class="c mo xy" style="left:1045.36px;top:709.58px">T</div><div class="c mo xb" style="left:1068.5px;top:709.58px">R</div><div class="c mo xm" style="left:1091.64px;top:709.58px">Y</div><div class="c mo xm" style="left:1114.78px;top:709.58px">W</div><div class="c mo xg" style="left:1137.92px;top:709.58px">M</div><div class="c mo xy" style="left:1161.06px;top:709.58px">Q</div><div class="sec" style="top:732.66px">V Germlines</div><div class="gl" style="top:755.74px"><i class="dot d2"></i><span class="eb"><svg viewBox="0 0 10 10" width="8.600" height="8.600"><path fill="#3b4656" d="M1 9l.45-2L6.800 1.650a.85.850 0 0 1 1.200 0l.35.350a.85.850 0 0 1 0 1.200L3 8.550z"/></svg></span><span class="gn">IGHV1-3<i>*</i>01</span><span class="gp">69.4%</span></div><div class="gl" style="top:778.82px"><i class="dot d2"></i><span class="eb"><svg viewBox="0 0 10 10" width="8.600" height="8.600"><path fill="#3b4656" d="M1 9l.45-2L6.800 1.650a.85.850 0 0 1 1.200 0l.35.350a.85.850 0 0 1 0 1.200L3 8.550z"/></svg></span><span class="gn">IGHV1-3<i>*</i>05</span><span class="gp">69.4%</span></div><div class="c ge xg" style="left:374.3px;top:755.74px">Q</div><div class="c ge xm" style="left:397.44px;top:755.74px">V</div><div class="c ge xg" style="left:420.58px;top:755.74px">Q</div><div class="c ge xm" style="left:443.72px;top:755.74px">L</div><div class="c ge xc" style="left:466.86px;top:755.74px">V</div><div class="c ge xg" style="left:490px;top:755.74px">Q</div><div class="c ge xg" style="left:513.14px;top:755.74px">S</div><div class="c ge xc" style="left:536.28px;top:755.74px">G</div><div class="c ge xg" style="left:559.42px;top:755.74px">A</div><div class="c ge xg" style="left:582.56px;top:755.74px">E</div><div class="c ge xc" style="left:605.7px;top:755.74px">V</div><div class="c ge xc" style="left:628.84px;top:755.74px">K</div><div class="c ge xc" style="left:651.98px;top:755.74px">K</div><div class="c ge xg" style="left:675.12px;top:755.74px">P</div><div class="c ge xg" style="left:698.26px;top:755.74px">G</div><div class="c ge xg" style="left:721.4px;top:755.74px">A</div><div class="c ge xg" style="left:744.54px;top:755.74px">S</div><div class="c ge xg" style="left:767.68px;top:755.74px">V</div><div class="c ge xg" style="left:790.82px;top:755.74px">K</div><div class="c ge xc" style="left:813.96px;top:755.74px">V</div><div class="c ge xg" style="left:837.1px;top:755.74px">S</div><div class="c ge xg" style="left:860.24px;top:755.74px">C</div><div class="c ge xg" style="left:883.38px;top:755.74px">K</div><div class="c ge xm" style="left:906.52px;top:755.74px">A</div><div class="c ge xg" style="left:929.66px;top:755.74px">S</div><div class="c ge xg" style="left:952.8px;top:755.74px">G</div><div class="c ge xm" style="left:975.94px;top:755.74px">Y</div><div class="c ge xm" style="left:999.08px;top:755.74px">T</div><div class="c ge xm" style="left:1022.22px;top:755.74px">F</div><div class="c ge xm" style="left:1045.36px;top:755.74px">T</div><div class="c ge xm" style="left:1068.5px;top:755.74px">S</div><div class="c ge xm" style="left:1091.64px;top:755.74px">Y</div><div class="c ge xm" style="left:1114.78px;top:755.74px">A</div><div class="c ge xm" style="left:1137.92px;top:755.74px">M</div><div class="c ge xm" style="left:1161.06px;top:755.74px">H</div><div class="c ge xg" style="left:374.3px;top:778.82px">Q</div><div class="c ge xm" style="left:397.44px;top:778.82px">V</div><div class="c ge xg" style="left:420.58px;top:778.82px">Q</div><div class="c ge xm" style="left:443.72px;top:778.82px">L</div><div class="c ge xc" style="left:466.86px;top:778.82px">V</div><div class="c ge xg" style="left:490px;top:778.82px">Q</div><div class="c ge xg" style="left:513.14px;top:778.82px">S</div><div class="c ge xc" style="left:536.28px;top:778.82px">G</div><div class="c ge xg" style="left:559.42px;top:778.82px">A</div><div class="c ge xg" style="left:582.56px;top:778.82px">E</div><div class="c ge xc" style="left:605.7px;top:778.82px">E</div><div class="c ge xc" style="left:628.84px;top:778.82px">K</div><div class="c ge xc" style="left:651.98px;top:778.82px">K</div><div class="c ge xg" style="left:675.12px;top:778.82px">P</div><div class="c ge xg" style="left:698.26px;top:778.82px">G</div><div class="c ge xg" style="left:721.4px;top:778.82px">A</div><div class="c ge xg" style="left:744.54px;top:778.82px">S</div><div class="c ge xg" style="left:767.68px;top:778.82px">V</div><div class="c ge xg" style="left:790.82px;top:778.82px">K</div><div class="c ge xc" style="left:813.96px;top:778.82px">V</div><div class="c ge xg" style="left:837.1px;top:778.82px">S</div><div class="c ge xg" style="left:860.24px;top:778.82px">C</div><div class="c ge xg" style="left:883.38px;top:778.82px">K</div><div class="c ge xm" style="left:906.52px;top:778.82px">A</div><div class="c ge xg" style="left:929.66px;top:778.82px">S</div><div class="c ge xg" style="left:952.8px;top:778.82px">G</div><div class="c ge xm" style="left:975.94px;top:778.82px">Y</div><div class="c ge xm" style="left:999.08px;top:778.82px">T</div><div class="c ge xm" style="left:1022.22px;top:778.82px">F</div><div class="c ge xm" style="left:1045.36px;top:778.82px">T</div><div class="c ge xm" style="left:1068.5px;top:778.82px">S</div><div class="c ge xm" style="left:1091.64px;top:778.82px">Y</div><div class="c ge xm" style="left:1114.78px;top:778.82px">A</div><div class="c ge xm" style="left:1137.92px;top:778.82px">M</div><div class="c ge xm" style="left:1161.06px;top:778.82px">H</div>
</div></div>
<div id="foot">Copyright © 2026 Ketchem Biotherapeutics Consulting LLC. All Rights Reserved. <span>v0.3.0</span></div>
<div id="gut"></div>
</div>
</body>
</html>
